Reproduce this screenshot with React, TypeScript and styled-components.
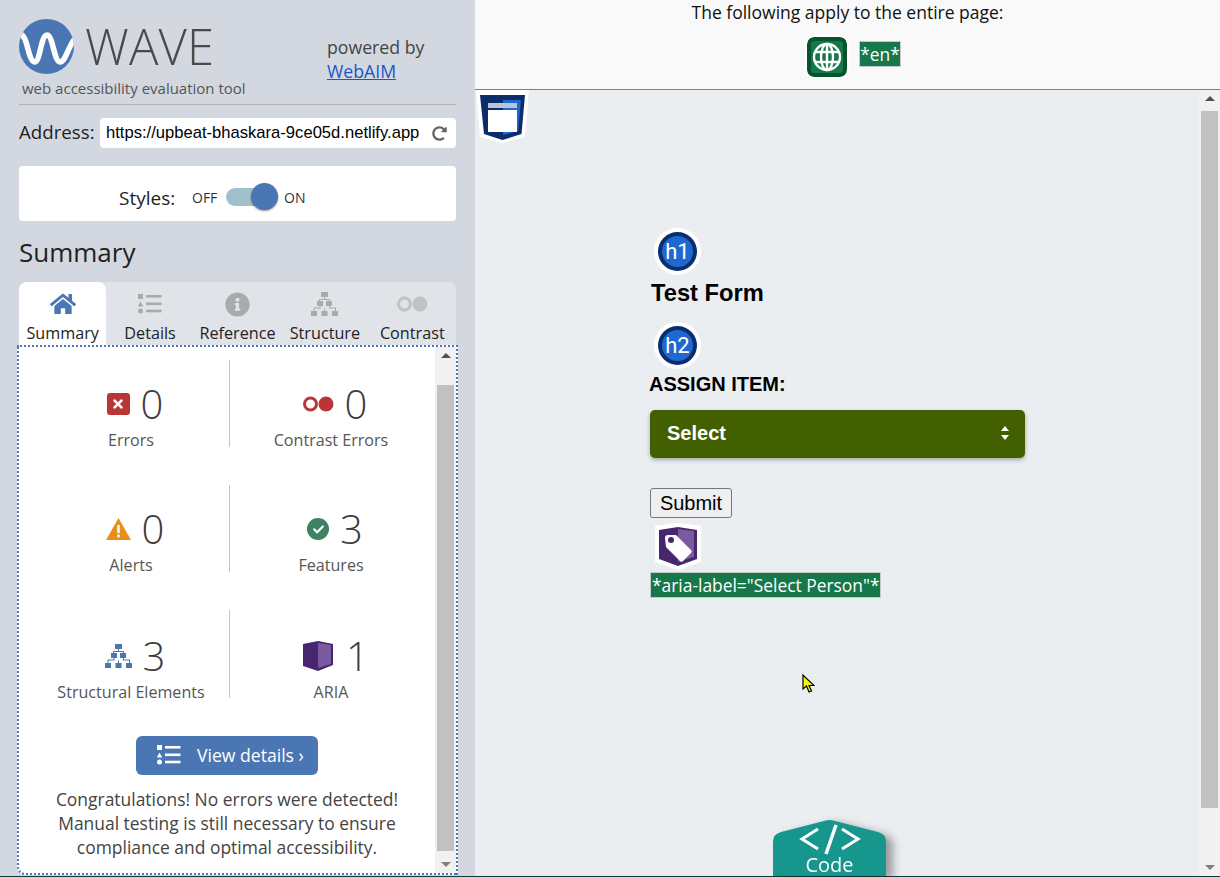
import React from "react";
import styled, { createGlobalStyle } from "styled-components";
import { FaHome, FaInfoCircle, FaCheck, FaTimes, FaRedoAlt } from "react-icons/fa";

const Global = createGlobalStyle`
  html, body { margin: 0; padding: 0; height: 100%; overflow: hidden; }
  body { font-family: "Open Sans", "Liberation Sans", sans-serif; }
  #root { height: 877px; width: 1220px; }
`;

const Page = styled.div`
  display: flex; flex-direction: column; width: 1220px; height: 877px; overflow: hidden;
`;
const Columns = styled.div`
  display: flex; height: 876px;
`;
const BottomEdge = styled.div`
  height: 1px; background: #123c3c;
`;
const Sidebar = styled.aside`
  width: 475px; flex: none; box-sizing: border-box; padding: 19px 19px 0; background: #d3d8e0;
  display: flex; flex-direction: column;
`;
const Header = styled.header`
  position: relative; height: 85px; border-bottom: 1px solid #b0b3b8; box-sizing: content-box;
  display: flex; justify-content: space-between;
`;
const Brand = styled.div`
  display: flex; flex-direction: column;
`;
const LogoRow = styled.div`
  display: flex; align-items: center; gap: 11px; height: 55px;
`;
const Wordmark = styled.span`
  font-size: 49px; font-weight: 300; color: #4a4a4a; line-height: 55px; letter-spacing: 0.2px;
`;
const Tagline = styled.span`
  font-size: 15px; color: #555; margin: 4px 0 0 3px; line-height: 20px; white-space: nowrap;
`;
const Powered = styled.div`
  width: 129px; font-size: 17.7px; line-height: 24px; color: #444; padding-top: 16px;
  a { color: #1a56c8; display: block; }
`;
const AddressRow = styled.div`
  display: flex; align-items: center; margin-top: 13px; height: 30px; gap: 5px;
`;
const AddressLabel = styled.label`
  font-size: 18.7px; color: #222; width: 76px; flex: none; white-space: nowrap; margin-top: -3px;
`;
const AddressBox = styled.div`
  flex: 1; height: 30px; background: #fff; border-radius: 4px; display: flex; align-items: center;
  justify-content: space-between; padding: 0 9px 0 6px; font: 16.6px "Liberation Sans", Arial, sans-serif; color: #000;
  white-space: nowrap; overflow: hidden; svg { color: #666; flex: none; }
`;
const StylesCard = styled.div`
  margin-top: 18px; height: 55px; box-sizing: border-box; padding: 7px 0 0 100px; background: #fff; border-radius: 4px;
  display: flex; align-items: center; color: #222;
`;
const StylesLabel = styled.span`
  font-size: 19px; width: 73px; padding-top: 1px;
`;
const ToggleWord = styled.span`
  font-size: 14px; color: #333; width: 25px;
`;
const Track = styled.span`
  position: relative; width: 46px; height: 18px; border-radius: 9px; background: #a0c0cc; margin: 0 12px 0 9px;
`;
const Knob = styled.span`
  position: absolute; right: -6px; top: -5px; width: 27px; height: 27px; border-radius: 50%;
  background: #4a77b4; box-shadow: 0 1px 2px rgba(0,0,0,.45);
`;
const SummaryTitle = styled.h2`
  margin: 14px 0 0; font-size: 26px; font-weight: 400; line-height: 35px; color: #222;
`;
const Tabs = styled.nav`
  margin-top: 12px; height: 63px; display: grid; grid-template-columns: repeat(5, 1fr);
  background: #e0e3e8; border-radius: 8px 8px 0 0;
`;
const Tab = styled.div<{ $active?: boolean }>`
  display: flex; flex-direction: column; align-items: center; font-size: 16.2px; color: #222;
  background: ${(p) => (p.$active ? "#fff" : "transparent")}; border-radius: 8px 8px 0 0; white-space: nowrap;
`;
const TabIcon = styled.span`
  height: 28px; margin-top: 8px; display: flex; align-items: center; justify-content: center; color: #a8aaad;
`;
const TabText = styled.span`
  line-height: 22px; margin-top: 4px;
`;
const Panel = styled.section`
  margin: 0 -2px; height: 530px; box-sizing: border-box; border: 2px dotted #4a77b4; background: #fff;
  border-radius: 0 0 0 8px; display: flex;
`;
const PanelBody = styled.div`
  flex: 1; min-width: 0; display: flex; flex-direction: column; align-items: center;
`;
const StatGrid = styled.div`
  margin-top: 13px; width: 100%; box-sizing: border-box; padding: 0 3px 0 14px;
  display: grid; grid-template-columns: 197px 1fr; grid-template-rows: 87px 87px 88px; row-gap: 38px;
`;
const Stat = styled.div<{ $divider?: boolean; $nudge?: number }>`
  display: flex; flex-direction: column; align-items: center; position: relative;
  border-right: ${(p) => (p.$divider ? "1px solid #c4c4c4" : "none")};
  padding-top: ${(p) => p.$nudge ?? 0}px;
`;
const StatTop = styled.div`
  display: flex; align-items: center; gap: 11px; margin: 16px 0 0 8px; height: 56px;
`;
const AriaTop = styled(StatTop)`
  gap: 13px; margin-left: 10px;
`;
const StatNum = styled.span`
  font-size: 40px; font-weight: 300; color: #3c3c3c; line-height: 56px;
`;
const StatLabel = styled.span`
  font-size: 16.1px; color: #555; line-height: 20px; margin-top: -2px; white-space: nowrap;
`;
const DetailsBtn = styled.button`
  margin-top: 38px; width: 182px; height: 39px; border: 0; border-radius: 6px; background: #4a77b4; color: #fff;
  font: 17.6px "Open Sans", sans-serif; display: flex; align-items: center; padding: 0 0 2px 21px; gap: 16px; white-space: nowrap;
`;
const Congrats = styled.p`
  margin: 12px 0 0; font-size: 17.45px; line-height: 24px; text-align: center; color: #444; white-space: nowrap;
`;
const Scroll = styled.div<{ $top: number; $bottom: number }>`
  width: 21px; flex: none; position: relative; background: #f1f1f1;
  padding: ${(p) => p.$top}px 2px ${(p) => p.$bottom}px 2px; box-sizing: border-box; display: flex;
`;
const Thumb = styled.div`
  flex: 1; background: #c1c1c1;
`;
const ArrowUp = styled.span`
  position: absolute; top: 6px; left: 50%; margin-left: -5px; width: 0; height: 0;
  border-left: 5px solid transparent; border-right: 5px solid transparent; border-bottom: 5px solid #505050;
`;
const ArrowDown = styled.span`
  position: absolute; bottom: 6px; left: 50%; margin-left: -5px; width: 0; height: 0;
  border-left: 5px solid transparent; border-right: 5px solid transparent; border-top: 5px solid #808080;
`;
const Main = styled.main`
  flex: 1; min-width: 0; display: flex; flex-direction: column; position: relative;
`;
const TopBar = styled.div`
  height: 89px; flex: none; background: #f9f9f9; border-bottom: 1px solid #808080; text-align: center;
  font-size: 17.5px; color: #111; line-height: 24px;
`;
const TopRow = styled.div`
  margin-top: 13px; display: flex; justify-content: center; align-items: flex-start; gap: 12px; padding-left: 13px;
`;
const GlobeBadge = styled.span`
  width: 40px; height: 40px; box-sizing: border-box; border-radius: 7px; background: #16784a; border: 4px solid #05542c;
  outline: 2px solid #fff; display: flex; align-items: center; justify-content: center; color: #fff;
`;
const TagText = styled.span`
  display: inline-block; background: #16784a; color: #fff; border: 1px solid #c8c8c8; font-size: 17.4px; line-height: 24px;
  white-space: nowrap; padding: 0 1px;
`;
const EnTag = styled(TagText)`
  margin-top: 4px; padding: 0;
`;
const CanvasRow = styled.div`
  flex: 1; display: flex; min-height: 0; background: #ebeef1; position: relative;
`;
const Canvas = styled.div`
  flex: 1; padding: 138px 0 0 175px; box-sizing: border-box; min-width: 0;
`;
const HeadingBadge = styled.span`
  display: flex; width: 47px; height: 47px; box-sizing: border-box; border-radius: 50%; background: #2167d0;
  border: 4px solid #fff; box-shadow: inset 0 0 0 4px #0a2f6c; color: #fff; align-items: center; justify-content: center;
  font: 22px Roboto, sans-serif; margin-left: 4px;
`;
const H1 = styled.h1`
  margin: 5px 0 0; font: bold 23.7px/27px "Liberation Sans", Arial, sans-serif; color: #000; padding-left: 1px;
`;
const H2Badge = styled(HeadingBadge)`
  margin-top: 15px;
`;
const H2 = styled.h2`
  margin: 4px 0 0 -1px; font: bold 20px/22px "Liberation Sans", Arial, sans-serif; color: #000;
`;
const SelectBox = styled.div`
  margin-top: 15px; width: 375px; height: 48px; box-sizing: border-box; background: #436000; border-radius: 5px; color: #fff;
  font: bold 20px "Liberation Sans", Arial, sans-serif; display: flex; align-items: center; justify-content: space-between;
  padding: 0 16px 2px 17px; box-shadow: 0 2px 4px rgba(0,0,0,.3);
`;
const SubmitBtn = styled.button`
  display: block; margin-top: 30px; width: 82px; height: 30px; padding: 0; border: 1px solid #767676; border-radius: 3px;
  background: #efefef; font: 20px "Liberation Sans", Arial, sans-serif; color: #000;
`;
const AriaTagIcon = styled.span`
  display: block; margin: 5px 0 0 4px; width: 48px; height: 48px;
`;
const AriaTag = styled(TagText)`
  margin-top: 1px; display: block; width: max-content;
`;
const CssBadge = styled.span`
  position: absolute; left: 1px; top: 0; width: 53px; height: 53px;
`;
const CodeTab = styled.div`
  position: absolute; left: 298px; bottom: 0; width: 113px; height: 56px; filter: drop-shadow(7px 3px 4px rgba(0,0,0,.35));
`;
const CodeShape = styled.svg`
  display: block;
`;
const CodeWord = styled.span`
  position: absolute; left: 0; right: 0; bottom: 0; text-align: center; color: #fff; font-size: 20px; line-height: 22px;
`;
const Cursor = styled.svg`
  position: absolute; left: 327px; top: 584px;
`;
const ErrorIcon = styled.span`
  width: 23px; height: 22px; background: #b93636; border-radius: 3px; display: flex; align-items: center; justify-content: center; color: #fff;
`;
const FeatureIcon = styled.span`
  width: 22px; height: 22px; border-radius: 50%; background: #3f8163; color: #fff; display: flex; align-items: center; justify-content: center;
`;

const Logo = () => (
  <svg width="55" height="55" viewBox="0 0 55 55">
    <defs><clipPath id="lc"><circle cx="27.5" cy="27.5" r="27.5" /></clipPath></defs>
    <circle cx="27.5" cy="27.5" r="27.5" fill="#4a77b4" />
    <path d="M-2 16 C4 12 7 22 9 30 C11 38 13 43 16 43 C21 43 22 16 28 16 C34 16 35 43 41 43 C47 43 49 26 58 17" fill="none" stroke="#fff" strokeWidth="5.5" clipPath="url(#lc)" />
  </svg>
);
const ListIcon = ({ color }: { color: string }) => (
  <svg width="24" height="20" viewBox="0 0 24 20" fill={color}>
    <rect x="0" y="0" width="5" height="5" />
    <path d="M2.5 7.5 L5.3 12.5 H-0.3 Z" />
    <circle cx="2.5" cy="17" r="2.5" />
    <rect x="8" y="1" width="15.5" height="2.6" />
    <rect x="8" y="8.5" width="15.5" height="2.6" />
    <rect x="8" y="15.7" width="15.5" height="2.6" />
  </svg>
);
const TreeIcon = ({ color }: { color: string }) => (
  <svg width="27" height="24" viewBox="0 0 27 24" fill={color}>
    <rect x="10" y="0" width="7" height="5" />
    <rect x="6" y="9" width="6" height="5" /><rect x="15" y="9" width="6" height="5" />
    <rect x="0" y="19" width="6" height="5" /><rect x="10.5" y="19" width="6" height="5" /><rect x="21" y="19" width="6" height="5" />
    <path d="M13 5h1v2h5v2h-1v-1h-9v1H8V7h5zM8.5 14h1v2.5h-6v2.5h-1v-3.5h6zM18 14h1v1.5h6V19h-1v-2.5h-6zM13 16.500h1V19h-1z" />
  </svg>
);
const ContrastIcon = ({ ring, fill }: { ring: string; fill: string }) => (
  <svg width="31" height="16" viewBox="0 0 31 16">
    <circle cx="7.500" cy="8" r="6" fill="none" stroke={ring} strokeWidth="3" />
    <circle cx="23" cy="8" r="7.500" fill={fill} />
  </svg>
);
const Alert = () => (
  <svg width="25" height="22" viewBox="0 0 25 22">
    <path d="M12.500 0 L25 22 H0 Z" fill="#e88f1a" />
    <rect x="11.200" y="7" width="2.600" height="8" fill="#fff" />
    <rect x="11.200" y="16.500" width="2.600" height="2.800" fill="#fff" />
  </svg>
);
const AriaIcon = () => (
  <svg width="30" height="30" viewBox="0 0 30 30">
    <path d="M0 3 L15 0 L30 3 V24 L15 30 L0 25 Z" fill="#47266f" />
    <path d="M15 2 L28 4 V23 L15 27 Z" fill="#7a5a9e" />
  </svg>
);
const GlobeIcon = () => (
  <svg width="30" height="30" viewBox="0 0 30 30" fill="none" stroke="#fff" strokeWidth="2.4">
    <circle cx="15" cy="15" r="13" />
    <ellipse cx="15" cy="15" rx="6" ry="13" />
    <path d="M15 2V28M3 10H27M3 20H27" />
  </svg>
);
const CssIcon = () => (
  <svg width="53" height="53" viewBox="0 0 53 53">
    <path d="M0 0H53L49 47L26.500 53L4 47Z" fill="#fff" />
    <path d="M4 5H49L45.500 44L26.500 50L8 44Z" fill="#0c2c6a" />
    <path d="M27 10H45L42 41L27 45Z" fill="#2167d0" />
    <rect x="12" y="13" width="29" height="5" fill="#b8c4d8" />
    <rect x="12" y="20" width="29" height="22" fill="#fff" />
  </svg>
);
const AriaBadge = () => (
  <svg width="48" height="48" viewBox="0 0 48 48">
    <path d="M1 3L24 0L47 3V39L24 47L1 39Z" fill="#fff" />
    <path d="M5 7L24 4L43 7V36L24 43L5 36Z" fill="#47266f" />
    <path d="M24 6L40 8V34L24 39Z" fill="#7a5a9e" />
    <path d="M11 15a3 3 0 0 1 3-3h8l15 15a2 2 0 0 1 0 3l-8 8a2 2 0 0 1-3 0L12 24z" fill="#fff" />
    <circle cx="17" cy="17" r="3" fill="#47266f" />
  </svg>
);

export default function App() {
  return (
    <Page>
      <Global />
      <Columns>
        <Sidebar>
          <Header>
            <Brand>
              <LogoRow><Logo /><Wordmark>WAVE</Wordmark></LogoRow>
              <Tagline>web accessibility evaluation tool</Tagline>
            </Brand>
            <Powered>powered by<a href="#webaim">WebAIM</a></Powered>
          </Header>
          <AddressRow>
            <AddressLabel>Address:</AddressLabel>
            <AddressBox>https://upbeat-bhaskara-9ce05d.netlify.app<FaRedoAlt size={15} /></AddressBox>
          </AddressRow>
          <StylesCard>
            <StylesLabel>Styles:</StylesLabel>
            <ToggleWord>OFF</ToggleWord>
            <Track><Knob /></Track>
            <ToggleWord>ON</ToggleWord>
          </StylesCard>
          <SummaryTitle>Summary</SummaryTitle>
          <Tabs>
            <Tab $active><TabIcon><FaHome size={26} color="#4a77b4" /></TabIcon><TabText>Summary</TabText></Tab>
            <Tab><TabIcon><ListIcon color="#a8aaad" /></TabIcon><TabText>Details</TabText></Tab>
            <Tab><TabIcon><FaInfoCircle size={25} /></TabIcon><TabText>Reference</TabText></Tab>
            <Tab><TabIcon><TreeIcon color="#a8aaad" /></TabIcon><TabText>Structure</TabText></Tab>
            <Tab><TabIcon><ContrastIcon ring="#c0c2c5" fill="#c0c2c5" /></TabIcon><TabText>Contrast</TabText></Tab>
          </Tabs>
          <Panel>
            <PanelBody>
              <StatGrid>
                <Stat $divider><StatTop><ErrorIcon><FaTimes size={14} /></ErrorIcon><StatNum>0</StatNum></StatTop><StatLabel>Errors</StatLabel></Stat>
                <Stat><StatTop><ContrastIcon ring="#b93636" fill="#b93636" /><StatNum>0</StatNum></StatTop><StatLabel>Contrast Errors</StatLabel></Stat>
                <Stat $divider><StatTop><Alert /><StatNum>0</StatNum></StatTop><StatLabel>Alerts</StatLabel></Stat>
                <Stat><StatTop><FeatureIcon><FaCheck size={11} /></FeatureIcon><StatNum>3</StatNum></StatTop><StatLabel>Features</StatLabel></Stat>
                <Stat $divider $nudge={2}><StatTop><TreeIcon color="#4a77b4" /><StatNum>3</StatNum></StatTop><StatLabel>Structural Elements</StatLabel></Stat>
                <Stat $nudge={2}><AriaTop><AriaIcon /><StatNum>1</StatNum></AriaTop><StatLabel>ARIA</StatLabel></Stat>
              </StatGrid>
              <DetailsBtn><ListIcon color="#fff" />View details ›</DetailsBtn>
              <Congrats>Congratulations! No errors were detected!<br />Manual testing is still necessary to ensure<br />compliance and optimal accessibility.</Congrats>
            </PanelBody>
            <Scroll $top={38} $bottom={22}><ArrowUp /><Thumb /><ArrowDown /></Scroll>
          </Panel>
        </Sidebar>
        <Main>
          <TopBar>
            The following apply to the entire page:
            <TopRow>
              <GlobeBadge><GlobeIcon /></GlobeBadge>
              <EnTag>*en*</EnTag>
            </TopRow>
          </TopBar>
          <CanvasRow>
            <Canvas>
              <HeadingBadge>h1</HeadingBadge>
              <H1>Test Form</H1>
              <H2Badge>h2</H2Badge>
              <H2>ASSIGN ITEM:</H2>
              <SelectBox>Select
                <svg width="8" height="14" viewBox="0 0 8 14" fill="#fff"><path d="M4 0L8 5H0ZM4 14L0 9H8Z" /></svg>
              </SelectBox>
              <SubmitBtn>Submit</SubmitBtn>
              <AriaTagIcon><AriaBadge /></AriaTagIcon>
              <AriaTag>*aria-label="Select Person"*</AriaTag>
            </Canvas>
            <Scroll $top={21} $bottom={68}><ArrowUp /><Thumb /><ArrowDown /></Scroll>
            <CssBadge><CssIcon /></CssBadge>
            <Cursor width="13" height="19" viewBox="0 0 13 19">
              <path d="M1 1V15L4.500 12L7 18L9.500 17L7 11.500H12Z" fill="#f5f500" stroke="#000" strokeWidth="1.200" />
            </Cursor>
            <CodeTab>
              <CodeShape width="113" height="56" viewBox="0 0 113 56">
                <path d="M0 56V22Q0 14 8 12L51 1Q57 -1 62 1L105 12Q113 14 113 22V56Z" fill="#17968e" />
                <path d="M45 9 L29 19 L45 29" fill="none" stroke="#fff" strokeWidth="3" />
                <path d="M69 9 L85 19 L69 29" fill="none" stroke="#fff" strokeWidth="3" />
                <path d="M63 5 L53 34" fill="none" stroke="#fff" strokeWidth="3.500" />
              </CodeShape>
              <CodeWord>Code</CodeWord>
            </CodeTab>
          </CanvasRow>
        </Main>
      </Columns>
      <BottomEdge />
    </Page>
  );
}
